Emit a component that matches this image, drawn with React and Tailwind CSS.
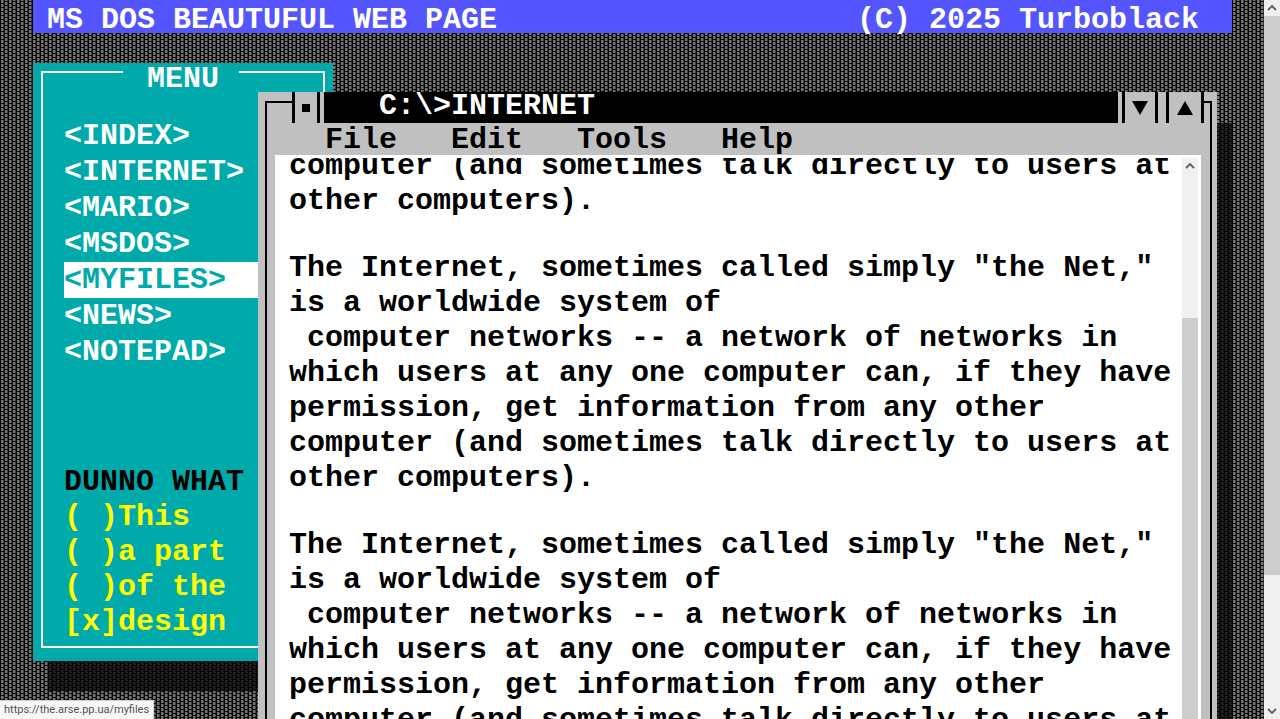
import { useState } from 'react';

const links = ['INDEX', 'INTERNET', 'MARIO', 'MSDOS', 'MYFILES', 'NEWS', 'NOTEPAD'];
const radios = ['This', 'a part', 'of the'];
const article = [
  'The Internet, sometimes called simply "the Net," is a worldwide system of',
  ' computer networks -- a network of networks in which users at any one computer can, if they have permission, get information from any other computer (and sometimes talk directly to users at other computers).',
];

function Backdrop() {
  return (
    <svg className="absolute inset-0 size-full" aria-hidden="true">
      <defs>
        <pattern id="weave" width="8" height="4" patternUnits="userSpaceOnUse">
          <rect width="8" height="4" fill="#080808" />
          <rect x="1" y="0" width="3" height="3" fill="#404040" />
          <rect x="1" y="0" width="2" height="3" fill="#747474" />
          <rect x="5" y="2" width="3" height="2" fill="#404040" />
          <rect x="5" y="0" width="3" height="1" fill="#404040" />
          <rect x="5" y="2" width="2" height="2" fill="#747474" />
          <rect x="5" y="0" width="2" height="1" fill="#747474" />
        </pattern>
      </defs>
      <rect width="100%" height="100%" fill="url(#weave)" />
    </svg>
  );
}

function Chevron({ down }) {
  return (
    <svg viewBox="0 0 16 16" className="block size-4" aria-hidden="true">
      <path d={down ? 'M4 6l4 4 4-4' : 'M4 10l4-4 4 4'} fill="none" stroke="#606060" strokeWidth="1.8" />
    </svg>
  );
}

function Options() {
  const [picked, setPicked] = useState(null);
  const [design, setDesign] = useState(true);
  return (
    <fieldset className="mt-[95px] leading-[35px] whitespace-nowrap">
      <legend>DUNNO WHAT</legend>
      {radios.map((name) => (
        <label key={name} className="relative block whitespace-pre text-[#ffff00]">
          <input type="radio" name="part" className="sr-only" checked={picked === name} onChange={() => setPicked(name)} />
          {(picked === name ? '(x)' : '( )') + name}
        </label>
      ))}
      <label className="relative block whitespace-pre text-[#ffff00]">
        <input type="checkbox" className="sr-only" checked={design} onChange={() => setDesign(!design)} />
        {(design ? '[x]' : '[ ]') + 'design'}
      </label>
    </fieldset>
  );
}

function Menu() {
  return (
    <nav aria-label="Menu" className="w-[300px] bg-[#00aaaa] px-2 pt-2 pb-[13px] shadow-[15px_30px_0_rgba(0,0,0,0.7)]">
      <div className="flex h-4 text-white">
        <span className="w-[82px] border-t-2 border-l-2 border-white" />
        <h2 className="w-[116px] pl-1 text-center leading-4">MENU</h2>
        <span className="flex-1 border-t-2 border-r-2 border-white" />
      </div>
      <div className="border-x-2 border-b-2 border-white pt-[31px] pb-[6px] pl-[21px]">
        <ul>
          {links.map((name) => (
            <li key={name}>
              <a
                href={'#' + name.toLowerCase()}
                className={
                  name === 'MYFILES'
                    ? 'block bg-white leading-9 text-[#00aaaa]'
                    : 'block leading-9 text-white'
                }
              >
                {'<' + name + '>'}
              </a>
            </li>
          ))}
        </ul>
        <Options />
      </div>
    </nav>
  );
}

function Window() {
  return (
    <section className="absolute top-[92px] right-[15px] -bottom-4 left-[225px] flex flex-col bg-[#c0c0c0] shadow-[15px_31px_0_rgba(0,0,0,0.7)]">
      <div className="flex h-[31px]">
        <span className="mt-[9px] ml-[7px] w-[27px] border-t-2 border-l-2 border-black" />
        <button aria-label="Close" className="grid w-7 place-items-center border-x-[3px] border-black">
          <span className="size-2 bg-black" />
        </button>
        <h1 className="ml-1 flex-1 bg-black pl-[55px] leading-7 text-white">C:\&gt;INTERNET</h1>
        <button aria-label="Minimize" className="ml-1 grid w-9 place-items-center border-x-[3px] border-black">
          <svg viewBox="0 0 16 14" className="w-4" aria-hidden="true"><path d="M0 0h16L8 14z" /></svg>
        </button>
        <button aria-label="Maximize" className="ml-2 grid w-[38px] place-items-center border-x-[3px] border-black">
          <svg viewBox="0 0 16 14" className="w-4" aria-hidden="true"><path d="M0 14h16L8 0z" /></svg>
        </button>
        <span className="mt-[9px] mr-[5px] w-2 border-t-2 border-r-2 border-black" />
      </div>
      <div className="mr-[5px] ml-[7px] flex min-h-0 flex-1 flex-col border-x-2 border-black pr-[9px] pl-2">
        <div className="flex h-8 gap-[54px] pl-[50px] leading-[34px]">
          <button>File</button>
          <button>Edit</button>
          <button>Tools</button>
          <button>Help</button>
        </div>
        <div className="flex min-h-0 flex-1 bg-white pt-[3px] pr-[3px] pl-[14px]">
          <article className="min-h-0 min-w-0 flex-1 overflow-hidden leading-[35px]">
            <p className="-mt-[9px]">computer (and sometimes talk directly to users at other computers).</p>
            {[0, 1].map((n) => (
              <div key={n} className="mt-8 whitespace-pre-wrap">
                <p>{article[0]}</p>
                <p>{article[1]}</p>
              </div>
            ))}
          </article>
          <div className="flex w-4 flex-col bg-[#f0f0f0]">
            <Chevron />
            <div className="mt-36 flex-1 bg-[#cdcdcd]" />
          </div>
        </div>
      </div>
    </section>
  );
}

export default function App() {
  return (
    <div className="flex h-screen overflow-hidden font-['Liberation_Mono','Courier_New',monospace] text-[30px] font-bold text-black">
      <main className="relative min-w-0 flex-1 overflow-hidden pr-8 pl-[33px]">
        <Backdrop />
        <div className="relative h-full">
          <header className="flex h-[33px] justify-between bg-[#5555ff] pr-[33px] pl-[14px] leading-10 whitespace-nowrap text-white">
            <span>MS DOS BEAUTUFUL WEB PAGE</span>
            <span>(C) 2025 Turboblack</span>
          </header>
          <div className="mt-[30px]">
            <Menu />
          </div>
          <Window />
        </div>
        <div className="absolute bottom-0 left-0 border-t border-r border-[#d0d0d0] bg-[#f8f8f8] px-1 font-['Roboto',sans-serif] text-[11px] leading-[18px] font-normal text-[#505050]">
          https://the.arse.pp.ua/myfiles
        </div>
      </main>
      <div className="flex w-4 flex-col justify-between bg-[#f0f0f0]">
        <Chevron />
        <div className="mb-32 flex-1 bg-[#cdcdcd]" />
        <Chevron down />
      </div>
    </div>
  );
}
